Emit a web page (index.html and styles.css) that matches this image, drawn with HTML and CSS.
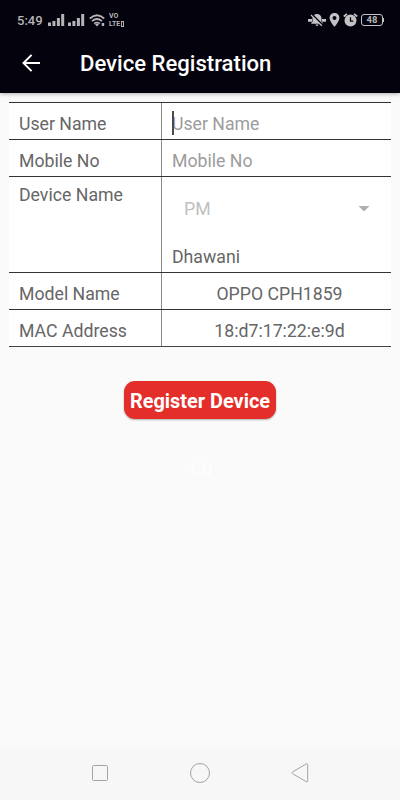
FILE: index.html
```
<!DOCTYPE html>
<html lang="en">
<head>
  <meta charset="UTF-8">
  <meta name="viewport" content="width=device-width, initial-scale=1.0">
  <title>Device Registration</title>
  <link rel="stylesheet" href="styles.css">
</head>
<body>
  <div class="screen">
    <header class="header">
      <div class="status-bar">
        <div class="status-left">
          <span class="time">5:49</span>
          <svg class="signal" width="17" height="12" viewBox="0 0 17 12">
            <path d="M0 8.500h3V12H0zM4.400 7h3v5h-3zM8.900 4h3v8h-3zM13.200 0h3v12h-3z"/>
          </svg>
          <svg class="signal" width="17" height="12" viewBox="0 0 17 12">
            <path d="M0 8.500h3V12H0zM4.400 7h3v5h-3zM8.900 4h3v8h-3zM13.200 0h3v12h-3z"/>
          </svg>
          <svg class="wifi" width="17" height="13" viewBox="0 0 17 13">
            <path d="M.8 4.500Q8 -2 15.200 4.500M3 7.200Q8 2.800 13 7.200M5.200 9.600Q8 7.400 10.800 9.600" fill="none" stroke="#b4b4b8" stroke-width="1.700"/>
            <path d="M6 10.200Q8 9 10 10.200L8 12.500zM12.700 9h2.500v3h-2.500z"/>
          </svg>
          <span class="volte"><span>VO</span><span class="lte">LTE<i></i></span></span>
        </div>
        <div class="status-right">
          <svg width="18" height="14" viewBox="0 0 18 14">
            <path d="M9 1C6.500 1 4.500 3 4.500 5.200V8L3.300 10v.8h11.400V10l-1.200-2V5.200C13.500 3 11.500 1 9 1zM7.500 11.500h3Q10 13 9 13t-1.500-1.500zM0 6h5v2.800H0zM13 6h5v2.800h-5z"/>
            <path d="M3.700 1.300l11 11" stroke="#04020c" stroke-width="2"/>
            <path d="M3 2l10.800 10.800" stroke="#c2c2c5" stroke-width="1.300"/>
          </svg>
          <svg width="11" height="14" viewBox="0 0 11 14">
            <path fill-rule="evenodd" d="M5.500 0C2.700 0 .6 2.100.6 4.900.6 8.300 5.500 13.700 5.500 13.700s4.900-5.400 4.900-8.800C10.400 2.100 8.300 0 5.500 0zm0 3a2 2 0 1 1 0 4 2 2 0 0 1 0-4z"/>
          </svg>
          <svg width="15" height="14" viewBox="0 0 15 14">
            <circle cx="7.500" cy="7.600" r="6"/>
            <path d="M.8 3.500L4 .8M14.200 3.500L11 .8" stroke="#c2c2c5" stroke-width="1.700"/>
            <path d="M7.500 4.200v3.900h2.800" fill="none" stroke="#04020c" stroke-width="1.300"/>
          </svg>
          <span class="battery">48</span>
        </div>
      </div>
      <div class="app-bar">
        <svg class="back" width="18" height="18" viewBox="0 0 18 18">
          <path d="M18 9H1.800M9.600 .9L1.500 9l8.100 8.100" fill="none" stroke="#fff" stroke-width="2"/>
        </svg>
        <h1>Device Registration</h1>
      </div>
    </header>

    <main class="content">
      <div class="form-table">
        <div class="row">
          <div class="label">User Name</div>
          <div class="value hint"><span class="cursor"></span>User Name</div>
        </div>
        <div class="row">
          <div class="label">Mobile No</div>
          <div class="value hint">Mobile No</div>
        </div>
        <div class="row tall">
          <div class="label">Device Name</div>
          <div class="value">
            <div class="spinner">
              <span>PM</span>
              <svg width="12" height="6" viewBox="0 0 12 6"><path d="M.5 0h11L6 5.500z"/></svg>
            </div>
            <div class="device">Dhawani</div>
          </div>
        </div>
        <div class="row">
          <div class="label">Model Name</div>
          <div class="value center">OPPO CPH1859</div>
        </div>
        <div class="row">
          <div class="label">MAC Address</div>
          <div class="value center">18:d7:17:22:e:9d</div>
        </div>
      </div>
      <button class="register">Register Device</button>
      <div class="version">1.0</div>
    </main>

    <nav class="nav-bar">
      <svg width="20" height="20" viewBox="0 0 20 20"><rect x="2.500" y="2.500" width="15" height="15" rx="1"/></svg>
      <svg width="20" height="20" viewBox="0 0 20 20"><circle cx="10" cy="10" r="9.500"/></svg>
      <svg width="20" height="20" viewBox="0 0 20 20"><path d="M16.300 .9L2.600 8.900Q1.200 9.800 2.600 10.700L16.300 18.700Q17.700 19.300 17.700 17.900V1.700Q17.700 .3 16.300 .9z"/></svg>
    </nav>
  </div>
</body>
</html>
```

FILE: styles.css
```
* {
  box-sizing: border-box;
}
body {
  margin: 0;
  font-family: Roboto, sans-serif;
  background-color: #fafafa;
  color: #666;
}
svg {
  display: block;
  flex: none;
}
.screen {
  display: flex;
  flex-direction: column;
  height: 800px;
}
.header {
  height: 93px;
  background-color: #04020c;
  box-shadow: 0 1px 4px rgba(0, 0, 0, 0.3);
}
.status-bar {
  display: flex;
  justify-content: space-between;
  align-items: center;
  height: 40px;
  padding: 0 17px;
  color: #b4b4b8;
  fill: #b4b4b8;
}
.status-left, .status-right {
  display: flex;
  align-items: center;
}
.time {
  width: 31px;
  font-size: 13px;
  font-weight: 500;
}
.signal {
  margin-right: 3px;
}
.wifi {
  margin: 0 3px 0 1px;
}
.volte {
  display: flex;
  flex-direction: column;
  font-size: 7px;
  line-height: 8px;
  font-weight: 700;
}
.volte span {
  height: 8px;
}
.lte {
  display: flex;
  align-items: center;
}
.volte i {
  width: 3px;
  height: 6px;
  margin-left: 1px;
  border: 1px solid #b4b4b8;
}
.status-right {
  gap: 3px;
  fill: #c2c2c5;
}
.battery {
  position: relative;
  width: 22px;
  height: 12px;
  border: 1px solid #c2c2c5;
  border-radius: 3px;
  font-size: 9.5px;
  line-height: 10px;
  font-weight: 700;
  text-align: center;
}
.battery::after {
  content: "";
  position: absolute;
  top: 3px;
  right: -2px;
  width: 1px;
  height: 4px;
  background-color: #c2c2c5;
}
.app-bar {
  display: flex;
  align-items: center;
  height: 45px;
  padding-left: 22px;
}
.app-bar h1 {
  margin: 1px 0 0 40px;
  font-size: 22.1px;
  font-weight: 500;
  color: #fff;
}
.content {
  flex: 1;
  display: flex;
  flex-direction: column;
  align-items: center;
  padding: 9px 9px 0;
}
.form-table {
  width: 100%;
  border-bottom: 1px solid #444;
  background-color: #fff;
  font-size: 17.7px;
  line-height: 21px;
}
.row {
  display: flex;
  height: 37px;
  border-top: 1px solid #333;
}
.row.tall {
  height: 96px;
}
.label {
  width: 153px;
  padding: 11px 0 0 10px;
  border-right: 1px solid #888;
}
.tall .label {
  padding-top: 8px;
}
.value {
  position: relative;
  flex: 1;
  padding: 11px 10px 0;
}
.hint {
  color: #9c9c9c;
}
.center {
  padding-left: 16px;
  text-align: center;
}
.cursor {
  position: absolute;
  left: 10px;
  top: 8px;
  width: 2px;
  height: 24px;
  background-color: #4a4a4a;
}
.spinner {
  display: flex;
  justify-content: space-between;
  align-items: center;
  height: 24px;
  margin-top: 9px;
  padding: 0 11px 0 12px;
  color: #c0c0c0;
  fill: #b0b0b0;
}
.device {
  margin-top: 26px;
}
.register {
  width: 152px;
  height: 38px;
  margin-top: 34px;
  padding: 2px 0 0;
  border: none;
  border-radius: 11px;
  background-color: #e42e29;
  box-shadow: 0 1px 2px rgba(0, 0, 0, 0.3);
  color: #fff;
  font-family: inherit;
  font-size: 19.9px;
  font-weight: 700;
}
.version {
  margin-top: 38px;
  font-size: 17px;
  line-height: 24px;
  color: #fff;
}
.nav-bar {
  display: flex;
  justify-content: center;
  align-items: center;
  gap: 80px;
  height: 53px;
  padding-bottom: 1px;
  background-color: #f7f7f7;
}
.nav-bar svg {
  fill: none;
  stroke: #a3a3a3;
}
```
